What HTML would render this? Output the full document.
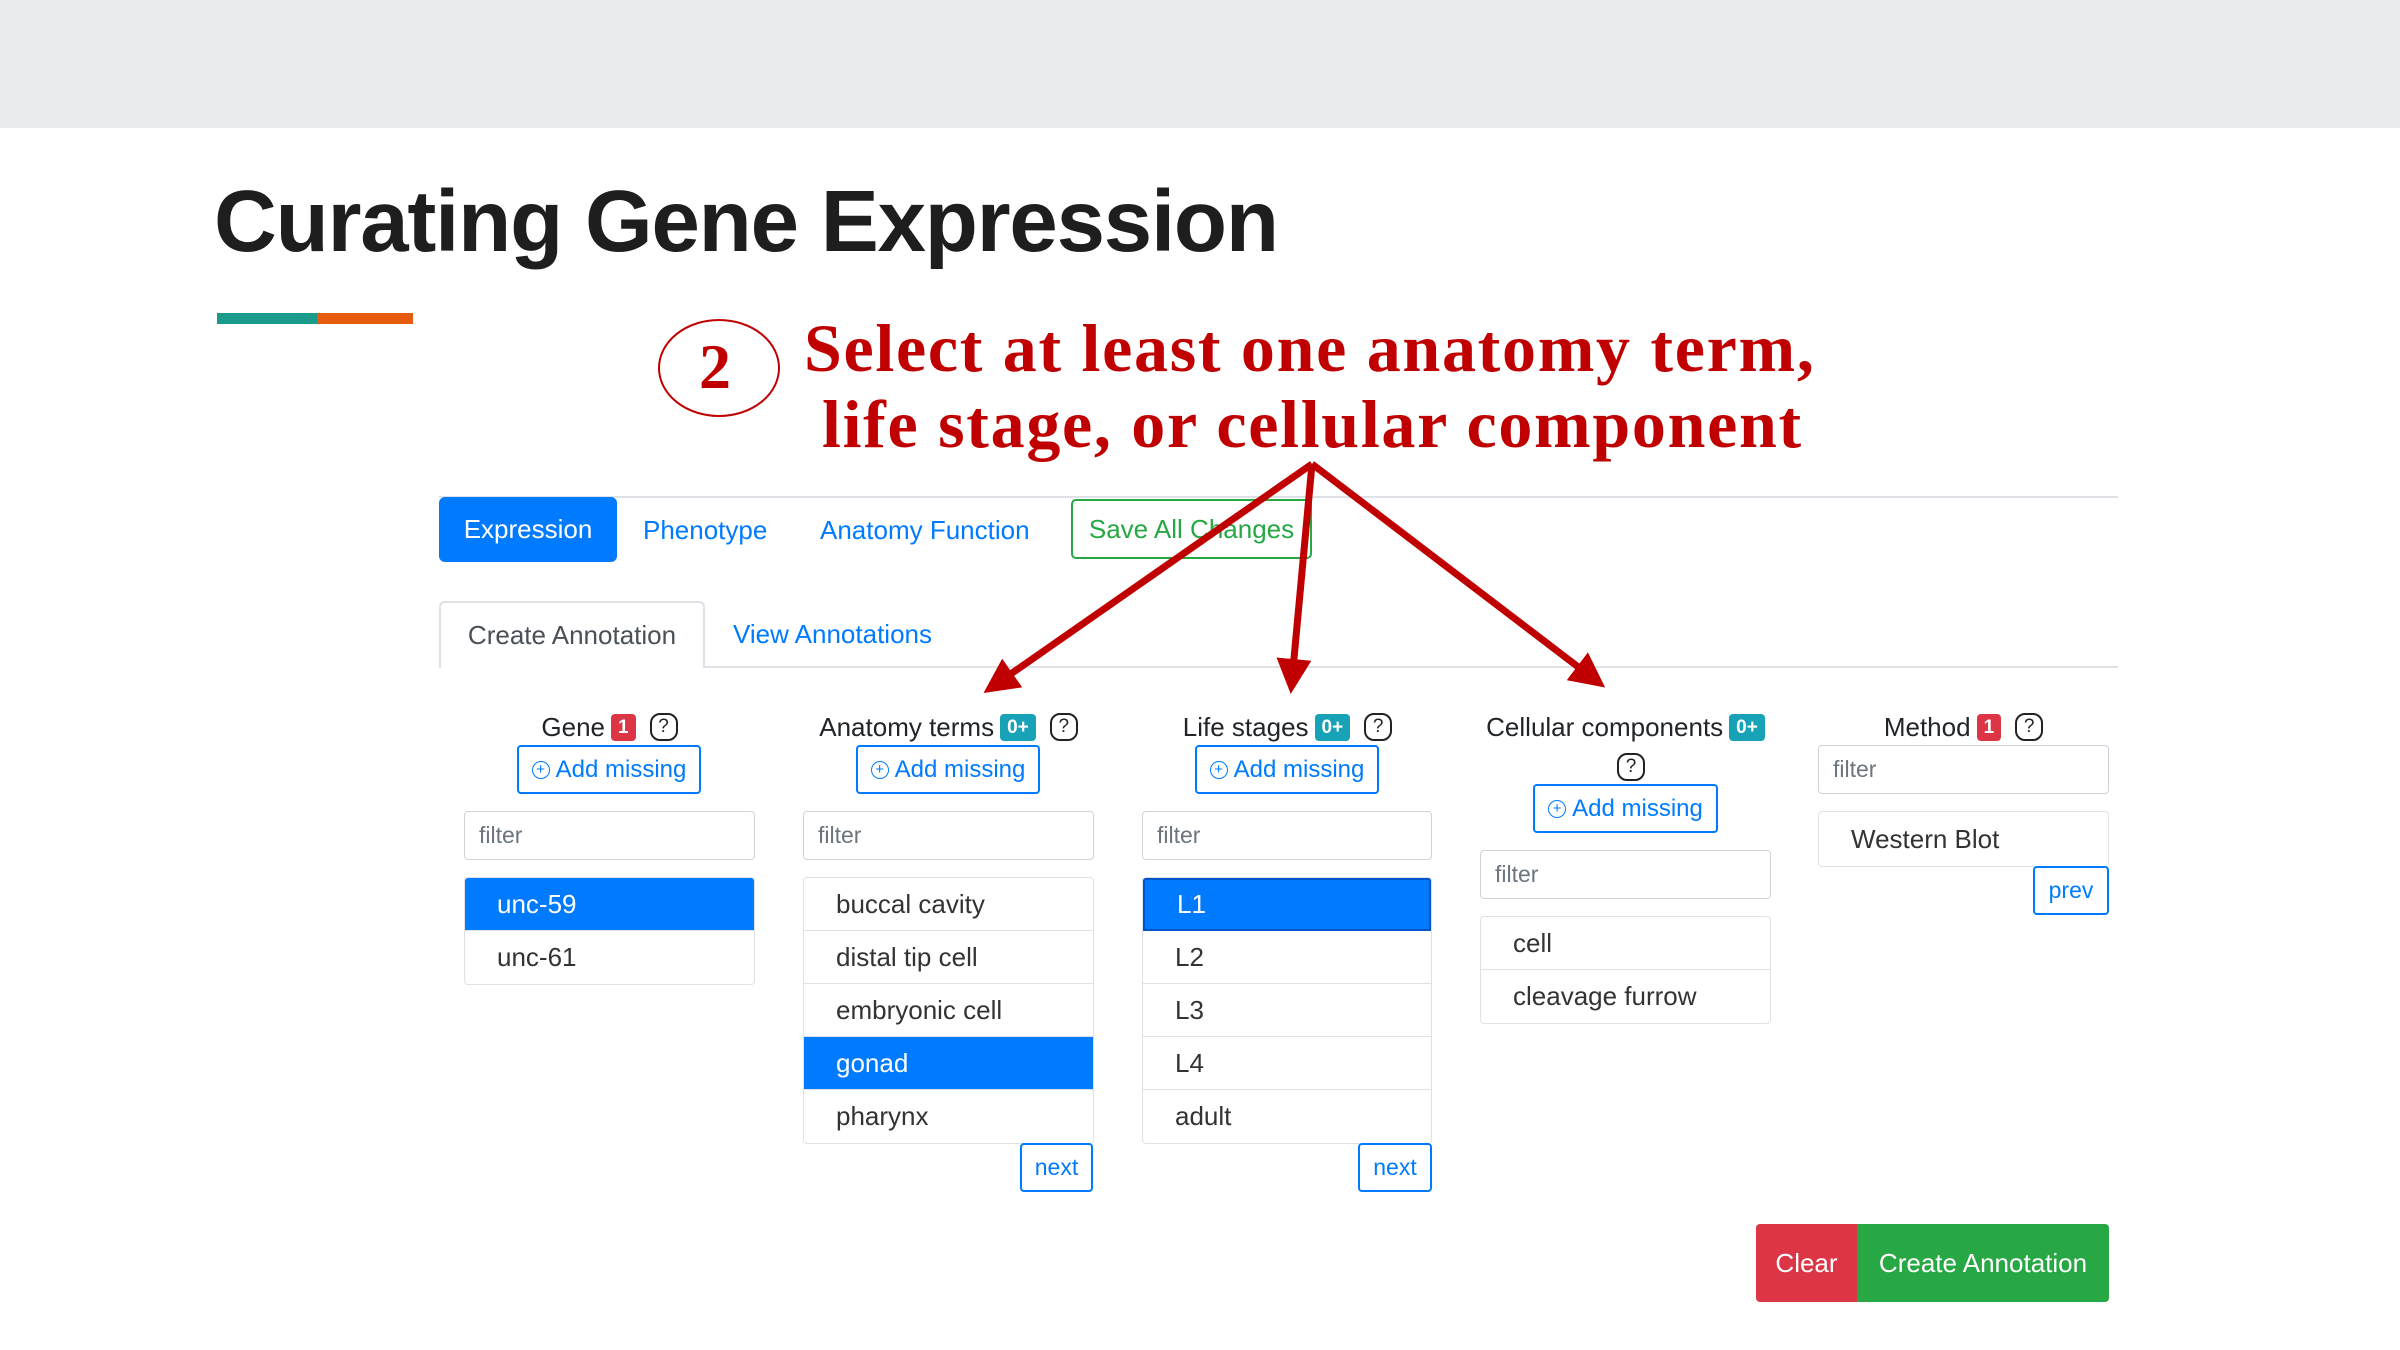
<!DOCTYPE html>
<html><head><meta charset="utf-8"><style>
*{box-sizing:border-box;margin:0;padding:0}
body{width:2400px;height:1350px;background:#fff;position:relative;overflow:hidden;font-family:"Liberation Sans",sans-serif;color:#212529}
.a{position:absolute}
.top{left:0;top:0;width:2400px;height:128px;background:#e9ecee}
h1{position:absolute;left:214px;top:172px;font-size:87px;font-weight:bold;color:#1e1e1e;letter-spacing:-1.2px;white-space:nowrap}
.red{color:#c00000;font-family:"Liberation Serif",serif;font-weight:bold;font-size:68px;letter-spacing:1.7px;white-space:nowrap}
.nav{font-size:26px;color:#007bff;white-space:nowrap}
.col{position:absolute;width:291px}
.hd{height:40px;display:flex;align-items:center;justify-content:center;font-size:26px;white-space:nowrap;gap:6px}
.badge{display:inline-block;color:#fff;font-weight:bold;font-size:19px;padding:3px 7px;border-radius:4px;line-height:21px}
.br{background:#dc3545}.bt{background:#17a2b8}
.q{display:inline-block;width:28px;height:28px;border:2px solid #222;border-radius:10px;font-size:19px;line-height:24px;text-align:center;margin-left:8px}
.add{position:absolute;height:49px;border:2px solid #007bff;border-radius:4px;color:#007bff;font-size:24px;display:flex;align-items:center;justify-content:center;white-space:nowrap;gap:6px}
.add i{font-style:normal;display:inline-block;width:18px;height:18px;border:1.5px solid #007bff;border-radius:50%;font-size:15px;line-height:15px;text-align:center}
.filt{position:absolute;height:49px;border:1.5px solid #ced4da;border-radius:4px;color:#6c757d;font-size:23px;padding-left:14px;display:flex;align-items:center}
.list{position:absolute;border:1.5px solid #dee2e6;border-radius:4px;overflow:hidden}
.it{height:53px;border-bottom:1.5px solid #dee2e6;font-size:26px;padding-left:32px;display:flex;align-items:center;color:#333}
.it:last-child{border-bottom:none}
.sel{background:#007bff;color:#fff}
.pg{position:absolute;height:49px;border:2px solid #007bff;border-radius:4px;color:#007bff;font-size:23px;display:flex;align-items:center;justify-content:center}
</style></head><body>
<div class="a top"></div>
<h1>Curating Gene Expression</h1>
<div class="a" style="left:217px;top:313px;width:100px;height:11px;background:#1a9a8a"></div>
<div class="a" style="left:317px;top:313px;width:96px;height:11px;background:#e65c0f"></div>
<svg class="a" style="left:0;top:0" width="2400" height="1350">
<ellipse cx="719" cy="368" rx="60" ry="48" fill="none" stroke="#c00000" stroke-width="2"/>
</svg>
<div class="a red" style="left:699px;top:330px;font-size:64px;letter-spacing:0">2</div>
<div class="a red" style="left:804px;top:309px">Select at least one anatomy term,</div>
<div class="a red" style="left:822px;top:385px">life stage, or cellular component</div>

<div class="a" style="left:439px;top:496px;width:1679px;height:2px;background:#dee2e6"></div>
<div class="a nav" style="left:439px;top:497px;width:178px;height:65px;background:#007bff;color:#fff;border-radius:6px;display:flex;align-items:center;justify-content:center">Expression</div>
<div class="a nav" style="left:643px;top:515px">Phenotype</div>
<div class="a nav" style="left:820px;top:515px">Anatomy Function</div>
<div class="a nav" style="left:1071px;top:499px;width:241px;height:60px;border:2px solid #28a745;border-radius:5px;color:#28a745;display:flex;align-items:center;justify-content:center">Save All Changes</div>

<div class="a" style="left:439px;top:666px;width:1679px;height:2px;background:#dee2e6"></div>
<div class="a nav" style="left:439px;top:601px;width:266px;height:67px;border:2px solid #dee2e6;border-bottom:none;background:#fff;border-radius:6px 6px 0 0;color:#495057;display:flex;align-items:center;justify-content:center">Create Annotation</div>
<div class="a nav" style="left:733px;top:619px">View Annotations</div>

<div class="col" style="left:464px;top:707px"><div class="hd">Gene <span class="badge br">1</span><span class="q">?</span></div></div>
<div class="add" style="left:517px;top:745px;width:184px"><i>+</i>Add missing</div>
<div class="filt" style="left:464px;top:811px;width:291px">filter</div>
<div class="list" style="left:464px;top:877px;width:291px"><div class="it sel">unc-59</div><div class="it">unc-61</div></div>

<div class="col" style="left:803px;top:707px"><div class="hd">Anatomy terms <span class="badge bt">0+</span><span class="q">?</span></div></div>
<div class="add" style="left:856px;top:745px;width:184px"><i>+</i>Add missing</div>
<div class="filt" style="left:803px;top:811px;width:291px">filter</div>
<div class="list" style="left:803px;top:877px;width:291px"><div class="it">buccal cavity</div><div class="it">distal tip cell</div><div class="it">embryonic cell</div><div class="it sel">gonad</div><div class="it">pharynx</div></div>
<div class="pg" style="left:1020px;top:1143px;width:73px">next</div>

<div class="col" style="left:1142px;top:707px"><div class="hd">Life stages <span class="badge bt">0+</span><span class="q">?</span></div></div>
<div class="add" style="left:1195px;top:745px;width:184px"><i>+</i>Add missing</div>
<div class="filt" style="left:1142px;top:811px;width:290px">filter</div>
<div class="list" style="left:1142px;top:877px;width:290px"><div class="it sel" style="border:2px solid #0056c8">L1</div><div class="it">L2</div><div class="it">L3</div><div class="it">L4</div><div class="it">adult</div></div>
<div class="pg" style="left:1358px;top:1143px;width:74px">next</div>

<div class="col" style="left:1480px;top:707px"><div class="hd">Cellular components <span class="badge bt">0+</span></div></div>
<div class="a" style="left:1617px;top:753px"><span class="q" style="margin:0">?</span></div>
<div class="add" style="left:1533px;top:784px;width:185px"><i>+</i>Add missing</div>
<div class="filt" style="left:1480px;top:850px;width:291px">filter</div>
<div class="list" style="left:1480px;top:916px;width:291px"><div class="it">cell</div><div class="it">cleavage furrow</div></div>

<div class="col" style="left:1818px;top:707px"><div class="hd">Method <span class="badge br">1</span><span class="q">?</span></div></div>
<div class="filt" style="left:1818px;top:745px;width:291px">filter</div>
<div class="list" style="left:1818px;top:811px;width:291px"><div class="it" style="height:54px">Western Blot</div></div>
<div class="pg" style="left:2033px;top:866px;width:76px">prev</div>

<div class="a" style="left:1756px;top:1224px;width:101px;height:78px;background:#dc3545;color:#fff;font-size:26px;display:flex;align-items:center;justify-content:center;border-radius:4px 0 0 4px">Clear</div>
<div class="a" style="left:1857px;top:1224px;width:252px;height:78px;background:#28a745;color:#fff;font-size:26px;display:flex;align-items:center;justify-content:center;border-radius:0 4px 4px 0">Create Annotation</div>

<svg class="a" style="left:0;top:0" width="2400" height="1350">
<defs><marker id="ar" markerWidth="5" markerHeight="5" refX="3" refY="2.5" orient="auto"><path d="M0,0 L5,2.5 L0,5 Z" fill="#c00000"/></marker></defs>
<g stroke="#c00000" stroke-width="7" fill="none" marker-end="url(#ar)">
<line x1="1312" y1="464" x2="995" y2="685"/>
<line x1="1312" y1="464" x2="1292" y2="680"/>
<line x1="1312" y1="464" x2="1594" y2="679"/>
</g>
</svg>
</body></html>
